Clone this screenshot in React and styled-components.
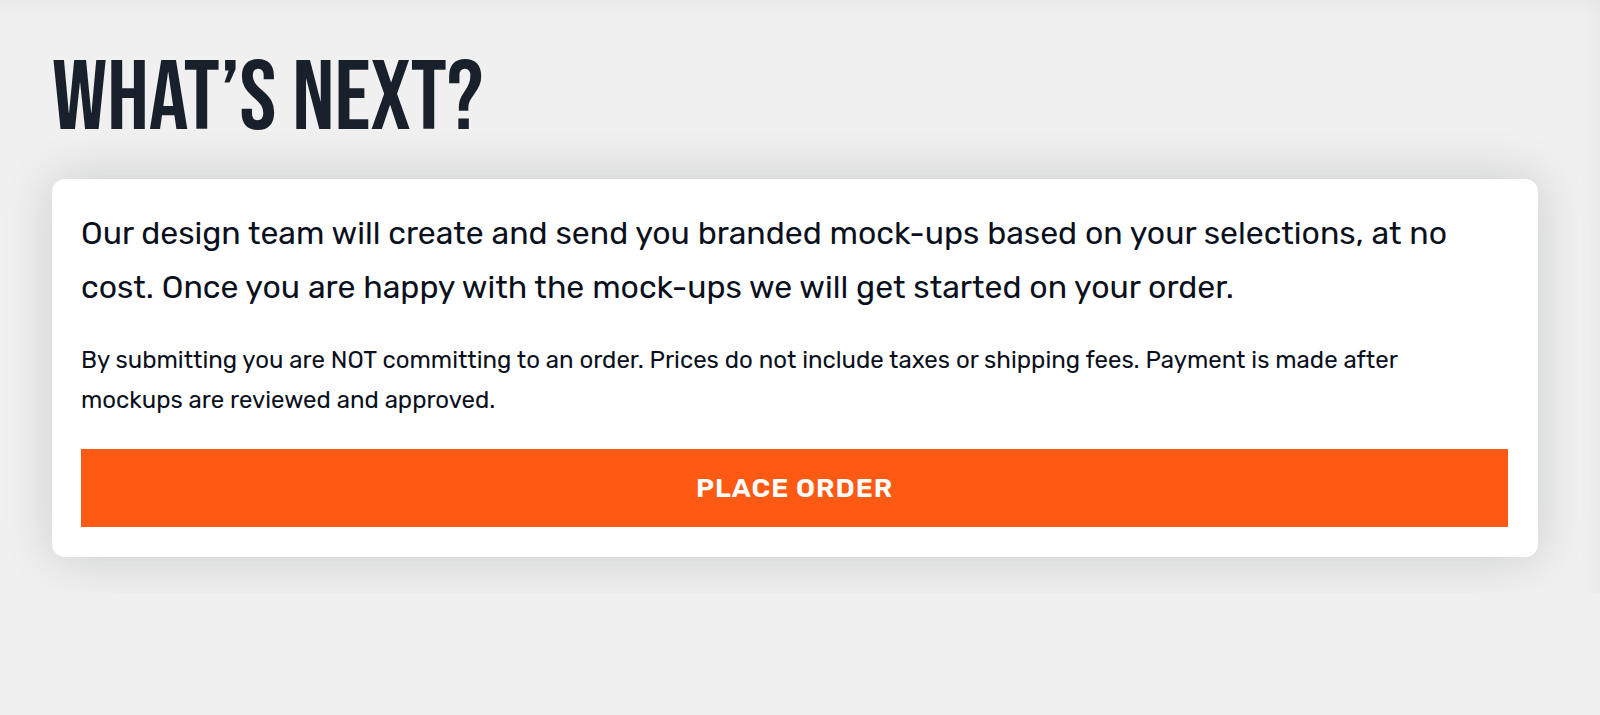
import React from "react";
import styled, { createGlobalStyle } from "styled-components";

const App = () => {
  return (
    <>
      <GlobalStyle />

      <NextSection>
        <Title>What’s next?</Title>

        {/* The white card with the details and the button */}
        <Card>
          <Lead>
            Our design team will create and send you branded mock-ups based on
            your selections, at no cost. Once you are happy with the mock-ups we
            will get started on your order.
          </Lead>
          <Note>
            By submitting you are NOT committing to an order. Prices do not
            include taxes or shipping fees. Payment is made after mockups are
            reviewed and approved.
          </Note>
          <OrderButton type="button">PLACE ORDER</OrderButton>
        </Card>
      </NextSection>
    </>
  );
};

export default App;

const GlobalStyle = createGlobalStyle`
  *,
  *::before,
  *::after {
    box-sizing: border-box;
  }

  body {
    margin: 0;
    background-color: #f0f0f0;
    color: #0b101d;
    font-family: Rubik, Roboto, "Liberation Sans", sans-serif;
  }
`;

// The main container, it cuts the card shadow at the bottom
const NextSection = styled.section`
  padding: 52px 62px 36px 52px;
  overflow: hidden;
  box-shadow: inset -12px 12px 24px -12px rgba(10, 20, 30, 0.05);
`;

// The section title
const Title = styled.h2`
  margin: 0 0 31px;
  font-family: "Bebas Neue", "Roboto Condensed", Roboto, sans-serif;
  font-size: 99px;
  font-weight: 400;
  line-height: 96px;
  text-transform: uppercase;
  color: #18202b;
`;

// The card styles
const Card = styled.div`
  display: flex;
  flex-direction: column;
  padding: 27px 30px 30px 29px;
  border-radius: 13px;
  background-color: #fff;
  box-shadow: 0 0 50px rgba(10, 20, 30, 0.16);
`;

const Lead = styled.p`
  margin: 0 0 26px;
  padding-right: 16px;
  font-size: 32px;
  line-height: 54px;
`;

const Note = styled.p`
  margin: 0 0 29px;
  padding-right: 16px;
  font-size: 24px;
  line-height: 40px;
`;

// The place order button
const OrderButton = styled.button`
  height: 78px;
  border: 0;
  background-color: #ff5a14;
  color: #fff;
  font-family: inherit;
  font-size: 27px;
  font-weight: 600;
  letter-spacing: 1px;
  cursor: pointer;
`;
